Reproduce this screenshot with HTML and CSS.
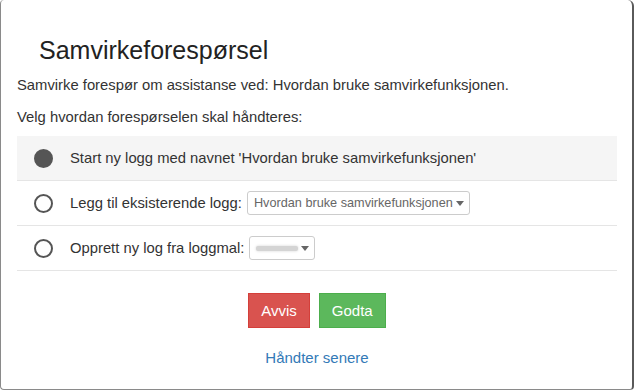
FILE: index.html
```html
<!DOCTYPE html>
<html lang="no">
<head>
    <meta charset="UTF-8">
    <meta name="viewport" content="width=device-width, initial-scale=1.0">
    <title>Samvirkeforespørsel</title>
    <link rel="stylesheet" href="styles.css">
</head>
<body>
    <div class="modal">
        <h1 class="modal-title">Samvirkeforespørsel</h1>

        <p class="intro">Samvirke forespør om assistanse ved: Hvordan bruke samvirkefunksjonen.</p>
        <p class="prompt">Velg hvordan forespørselen skal håndteres:</p>

        <div class="choices">
            <label class="choice active">
                <span class="radio checked"></span>
                <span class="choice-text">Start ny logg med navnet 'Hvordan bruke samvirkefunksjonen'</span>
            </label>
            <label class="choice">
                <span class="radio"></span>
                <span class="choice-text">Legg til eksisterende logg:</span>
                <span class="select">Hvordan bruke samvirkefunksjonen <span class="caret"></span></span>
            </label>
            <label class="choice">
                <span class="radio"></span>
                <span class="choice-text">Opprett ny log fra loggmal:</span>
                <span class="select"><span class="blurred"></span> <span class="caret"></span></span>
            </label>
        </div>

        <div class="actions">
            <button class="btn btn-danger">Avvis</button>
            <button class="btn btn-success">Godta</button>
        </div>

        <a class="later" href="#">Håndter senere</a>
    </div>
</body>
</html>
```

FILE: styles.css
```css
body { margin: 0; font-family: "Liberation Sans", Arial, sans-serif; color: #333; background: #fff; }
.modal { box-sizing: border-box; width: 634px; height: 390px; border-left: 1px solid #8a8a8a; border-right: 2px solid #5a5a5a; border-bottom: 1px solid #8a8a8a; border-radius: 4px 6px 4px 4px; padding: 0 15px 0 16px; }
.modal-title { margin: 0; padding: 35px 0 0 22px; font-size: 25px; font-weight: normal; line-height: 30px; color: #222; }
.intro { margin: 10px 0 0; font-size: 14.8px; line-height: 20px; }
.prompt { margin: 12px 0 0; font-size: 14.8px; line-height: 20px; }
.choices { margin-top: 9px; }
.choice { display: flex; align-items: center; height: 44px; border-bottom: 1px solid #e5e5e5; font-size: 14.8px; }
.choice.active { background: #f5f5f5; }
.radio { box-sizing: border-box; width: 19px; height: 19px; border: 2px solid #555; border-radius: 50%; margin: 0 17px 0 17px; flex: none; }
.radio.checked { background: #555; }
.choice-text { color: #333; }
.select { display: inline-flex; align-items: center; height: 22px; margin-left: 5px; padding: 0 5px 0 6px; border: 1px solid #ccc; border-radius: 3px; font-size: 12.7px; color: #666; }
.caret { display: inline-block; width: 0; height: 0; margin-left: 3px; border-left: 4px solid transparent; border-right: 4px solid transparent; border-top: 5px solid #666; }
.blurred { display: inline-block; width: 42px; height: 5px; background: #d4d4d4; border-radius: 2px; box-shadow: 0 0 3px #d4d4d4; }
.actions { display: flex; justify-content: center; gap: 9px; margin-top: 22px; }
.btn { height: 35px; padding: 0 12px; border: 1px solid transparent; border-radius: 0; color: #fff; font-family: inherit; font-size: 15px; cursor: pointer; }
.btn-danger { background: #d9534f; border-color: #d43f3a; }
.btn-success { background: #5cb85c; border-color: #4cae4c; }
.later { display: block; width: max-content; margin: 21px auto 0; font-size: 15px; color: #337ab7; text-decoration: none; }
```
